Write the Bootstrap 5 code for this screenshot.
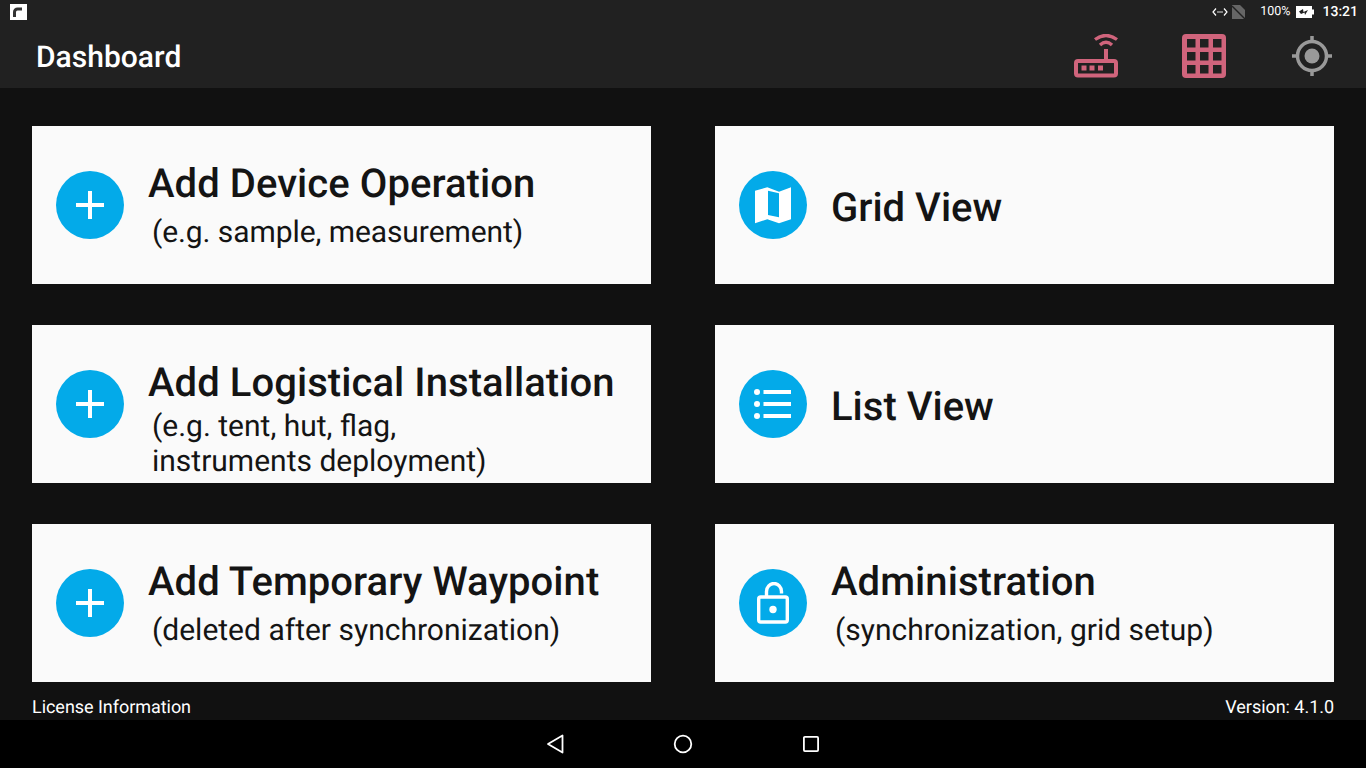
<!DOCTYPE html>
<html>
  <head>
    <title>Dashboard</title>
    <link href="https://cdn.jsdelivr.net/npm/bootstrap@5.3.0/dist/css/bootstrap.min.css" rel="stylesheet" />
    <style>
      html, body { height: 100%; }
      body {
        background-color: #111;
        font-family: Roboto, "Liberation Sans", sans-serif;
        text-rendering: geometricPrecision;
        overflow: hidden;
      }
      .status-strip { height: 24px; background-color: #212121; color: #fff; padding: 0 8px 0 10px; }
      .status-pct { font-size: 12.5px; margin: 0 6px 0 15px; line-height: 24px; }
      .status-time { font-size: 14px; font-weight: 500; margin-left: 8px; line-height: 24px; }
      .app-toolbar { height: 64px; background-color: #212121; padding: 0 32px 0 36px; }
      .app-title { font-size: 30px; font-weight: 500; color: #fff; line-height: 64px; margin: 0; padding-top: 4px; letter-spacing: .02px; }
      .toolbar-icons { gap: 64px; }
      .tile-area { height: 632px; padding: 38px 32px 0; }
      .tile-grid {
        display: grid;
        grid-template-columns: 619px 619px;
        grid-auto-rows: 158px;
        column-gap: 64px;
        row-gap: 41px;
      }
      .tile { background-color: #fafafa; border: 0; border-radius: 0; padding-left: 24px; color: #141414; }
      .tile-circle {
        width: 68px;
        height: 68px;
        border-radius: 50%;
        background-color: #03aae9;
        flex-shrink: 0;
        margin-right: 24px;
      }
      .tile-body-top { align-self: flex-start; padding-top: 34px; }
      .tile-title { font-size: 40px; font-weight: 500; line-height: 47px; margin: 0; white-space: nowrap; letter-spacing: .06px; }
      .tile-title-solo { margin-top: 4px; letter-spacing: 0; }
      .tile-sub { font-size: 30px; line-height: 34px; margin: 9px 0 0 4px; white-space: nowrap; }
      .tile-sub-narrow { letter-spacing: -.08px; }
      .tile-sub-tight { margin-top: 4px; line-height: 34.5px; }
      .foot-row { font-size: 18px; line-height: 24px; color: #fff; margin-top: 14px; letter-spacing: -.04px; }
      .soft-nav { height: 48px; background-color: #000; gap: 96px; }
    </style>
  </head>
  <body>
    <div class="status-strip d-flex align-items-center">
      <svg width="17" height="17" viewBox="0 0 17 17">
        <rect width="17" height="16" fill="#fff" />
        <path d="M4.500 13V8a3 3 0 0 1 3-3h4.500" fill="none" stroke="#333" stroke-width="3" />
      </svg>
      <div class="ms-auto d-flex align-items-center">
        <svg width="16" height="12" viewBox="0 0 16 12">
          <path d="M4 2.500 1 6l3 3.500M12 2.500 15 6l-3 3.500" fill="none" stroke="#fff" stroke-width="1.200" />
          <circle cx="6" cy="6" r=".8" fill="#fff" /><circle cx="8" cy="6" r=".8" fill="#fff" /><circle cx="10" cy="6" r=".8" fill="#fff" />
        </svg>
        <svg class="ms-1" width="13" height="14" viewBox="0 0 13 14">
          <path d="M0 0h8l5 5v9H0z" fill="#666" />
          <path d="M0 1 13 14" stroke="#212121" stroke-width="1.400" />
        </svg>
        <span class="status-pct">100%</span>
        <svg width="18" height="12" viewBox="0 0 18 12">
          <path d="M0 0h16v3.500h2v5h-2V12H0z" fill="#fff" />
          <path d="M3 5.500 7 3l.5 3L12 4 9 9 8.500 6.500 5 8z" fill="#212121" />
        </svg>
        <span class="status-time">13:21</span>
      </div>
    </div>

    <nav class="app-toolbar d-flex align-items-center justify-content-between">
      <h1 class="app-title">Dashboard</h1>
      <div class="toolbar-icons d-flex align-items-center">
        <svg width="44" height="44" viewBox="0 0 44 44">
          <path d="M21 5.500Q32-2.500 43 5.500M26 11Q32 5.500 38 11" fill="none" stroke="#d0647c" stroke-width="3.400" />
          <rect x="30" y="15" width="4" height="11" fill="#d0647c" />
          <rect x="2" y="27" width="40" height="14.500" rx="2" fill="none" stroke="#d0647c" stroke-width="4" />
          <rect x="7.500" y="31.500" width="5" height="5" fill="#d0647c" />
          <rect x="15.500" y="31.500" width="5" height="5" fill="#d0647c" />
          <rect x="24" y="31.500" width="5" height="5" fill="#d0647c" />
        </svg>
        <svg width="44" height="44" viewBox="0 0 44 44">
          <rect width="44" height="44" rx="4" fill="#d0647c" />
          <g fill="#212121">
            <rect x="5" y="5" width="8.500" height="8.500" /><rect x="18" y="5" width="8.500" height="8.500" /><rect x="31" y="5" width="8.500" height="8.500" />
            <rect x="5" y="18" width="8.500" height="8.500" /><rect x="18" y="18" width="8.500" height="8.500" /><rect x="31" y="18" width="8.500" height="8.500" />
            <rect x="5" y="31" width="8.500" height="8.500" /><rect x="18" y="31" width="8.500" height="8.500" /><rect x="31" y="31" width="8.500" height="8.500" />
          </g>
        </svg>
        <svg width="44" height="44" viewBox="0 0 44 44">
          <circle cx="22" cy="22" r="14.500" fill="none" stroke="#999" stroke-width="3.500" />
          <circle cx="22" cy="22" r="7.500" fill="#999" />
          <path d="M22 2v6M22 36v6M2 22h6M36 22h6" stroke="#999" stroke-width="3.500" />
        </svg>
      </div>
    </nav>

    <main class="tile-area">
      <div class="tile-grid">
        <div class="card tile flex-row align-items-center">
          <div class="tile-circle d-flex align-items-center justify-content-center">
            <svg width="28" height="28" viewBox="0 0 28 28"><path d="M14 0v28M0 14h28" stroke="#fff" stroke-width="4" /></svg>
          </div>
          <div class="tile-body-top">
            <p class="tile-title">Add Device Operation</p>
            <p class="tile-sub tile-sub-narrow">(e.g. sample, measurement)</p>
          </div>
        </div>
        <div class="card tile flex-row align-items-center">
          <div class="tile-circle d-flex align-items-center justify-content-center">
            <svg width="38" height="38" viewBox="0 0 38 38">
              <path d="M1 4.700 13.300 1.300 25 5.700 37 1.300v32L25 37.300 13.300 33.300 1 37.300zM14 4.700V29l11 2.300V7.300z" fill="#fff" fill-rule="evenodd" />
            </svg>
          </div>
          <p class="tile-title tile-title-solo">Grid View</p>
        </div>
        <div class="card tile flex-row align-items-center">
          <div class="tile-circle d-flex align-items-center justify-content-center">
            <svg width="28" height="28" viewBox="0 0 28 28"><path d="M14 0v28M0 14h28" stroke="#fff" stroke-width="4" /></svg>
          </div>
          <div class="tile-body-top">
            <p class="tile-title">Add Logistical Installation</p>
            <p class="tile-sub tile-sub-tight">(e.g. tent, hut, flag,<br />instruments deployment)</p>
          </div>
        </div>
        <div class="card tile flex-row align-items-center">
          <div class="tile-circle d-flex align-items-center justify-content-center">
            <svg width="38" height="30" viewBox="0 0 38 30">
              <g fill="#fff">
                <circle cx="3" cy="3" r="3" /><circle cx="3" cy="15" r="3" /><circle cx="3" cy="27" r="3" />
                <rect x="9.500" y="1" width="27.500" height="4" /><rect x="9.500" y="13" width="27.500" height="4" /><rect x="9.500" y="25" width="27.500" height="4" />
              </g>
            </svg>
          </div>
          <p class="tile-title tile-title-solo">List View</p>
        </div>
        <div class="card tile flex-row align-items-center">
          <div class="tile-circle d-flex align-items-center justify-content-center">
            <svg width="28" height="28" viewBox="0 0 28 28"><path d="M14 0v28M0 14h28" stroke="#fff" stroke-width="4" /></svg>
          </div>
          <div class="tile-body-top">
            <p class="tile-title">Add Temporary Waypoint</p>
            <p class="tile-sub">(deleted after synchronization)</p>
          </div>
        </div>
        <div class="card tile flex-row align-items-center">
          <div class="tile-circle d-flex align-items-center justify-content-center">
            <svg width="32" height="42" viewBox="0 0 32 42">
              <path d="M9.500 15V9.500a7.500 8 0 0 1 15 0v2" fill="none" stroke="#fff" stroke-width="3.400" />
              <rect x="1.700" y="15" width="28.600" height="25" rx="2" fill="none" stroke="#fff" stroke-width="3.400" />
              <circle cx="16" cy="27.500" r="3.700" fill="#fff" />
            </svg>
          </div>
          <div class="tile-body-top">
            <p class="tile-title">Administration</p>
            <p class="tile-sub">(synchronization, grid setup)</p>
          </div>
        </div>
      </div>
      <div class="foot-row d-flex justify-content-between">
        <span>License Information</span>
        <span>Version: 4.1.0</span>
      </div>
    </main>

    <nav class="soft-nav d-flex align-items-center justify-content-center">
      <svg width="32" height="20" viewBox="0 0 32 20">
        <path d="M9 10 23.500 1.500v17z" fill="none" stroke="#fff" stroke-width="1.800" stroke-linejoin="round" />
      </svg>
      <svg width="32" height="20" viewBox="0 0 32 20"><circle cx="16" cy="10" r="8.300" fill="none" stroke="#fff" stroke-width="1.800" /></svg>
      <svg width="32" height="20" viewBox="0 0 32 20"><rect x="8.900" y="2.900" width="14.200" height="14.200" rx="1" fill="none" stroke="#fff" stroke-width="1.800" /></svg>
    </nav>

    <script src="https://cdn.jsdelivr.net/npm/bootstrap@5.3.0/dist/js/bootstrap.bundle.min.js"></script>
  </body>
</html>
